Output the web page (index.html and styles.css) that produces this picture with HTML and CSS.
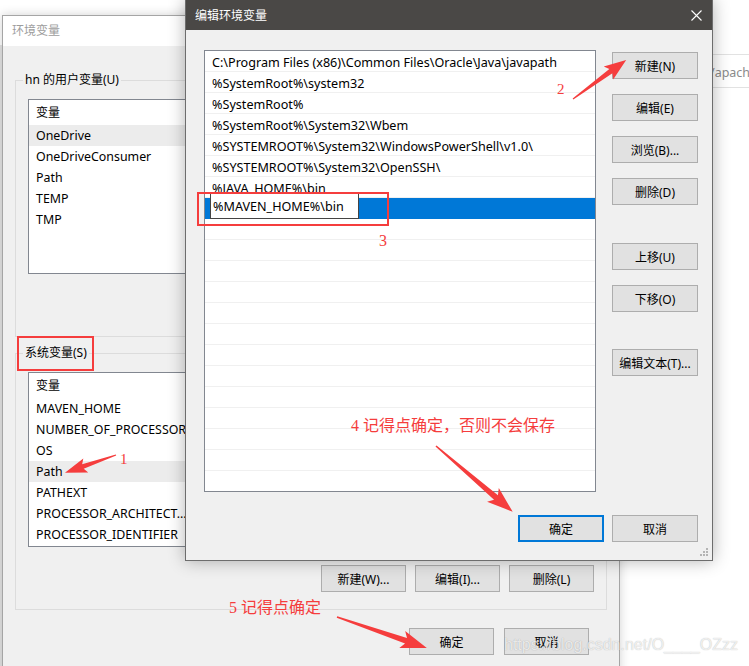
FILE: index.html
```html
<!DOCTYPE html>
<html lang="zh-CN">
<head>
    <meta charset="UTF-8">
    <title>编辑环境变量</title>
    <link rel="stylesheet" href="styles.css">
</head>
<body>
    <div class="desk">
        <div class="edge-strip"></div>
        <div class="bg-field">/apache</div>

        <!-- back window: 环境变量 -->
        <section class="win env">
            <div class="env-title">环境变量</div>
            <div class="env-body">
                <fieldset class="group">
                    <legend>hn 的用户变量(U)</legend>
                    <div class="listview">
                        <div class="lv-head">变量</div>
                        <div class="lv-row hot">OneDrive</div>
                        <div class="lv-row">OneDriveConsumer</div>
                        <div class="lv-row">Path</div>
                        <div class="lv-row">TEMP</div>
                        <div class="lv-row">TMP</div>
                    </div>
                    <div class="btn-row">
                        <button class="btn">新建(N)...</button>
                        <button class="btn">编辑(E)...</button>
                        <button class="btn">删除(D)</button>
                    </div>
                </fieldset>
                <fieldset class="group">
                    <legend>系统变量(S)</legend>
                    <div class="listview">
                        <div class="lv-head">变量</div>
                        <div class="lv-row">MAVEN_HOME</div>
                        <div class="lv-row">NUMBER_OF_PROCESSORS</div>
                        <div class="lv-row">OS</div>
                        <div class="lv-row hot">Path</div>
                        <div class="lv-row">PATHEXT</div>
                        <div class="lv-row">PROCESSOR_ARCHITECT...</div>
                        <div class="lv-row">PROCESSOR_IDENTIFIER</div>
                    </div>
                    <div class="btn-row">
                        <button class="btn">新建(W)...</button>
                        <button class="btn">编辑(I)...</button>
                        <button class="btn">删除(L)</button>
                    </div>
                </fieldset>
                <div class="env-foot">
                    <button class="btn">确定</button>
                    <button class="btn">取消</button>
                </div>
            </div>
        </section>

        <!-- front window: 编辑环境变量 -->
        <section class="win edit">
            <div class="edit-title">
                <span>编辑环境变量</span>
                <svg class="close" width="11" height="11" viewBox="0 0 11 11">
                    <path d="M0.5 0.5L10.5 10.5M10.5 0.5L0.5 10.5" stroke="#fff" stroke-width="1.1" fill="none"/>
                </svg>
            </div>
            <div class="edit-body">
                <div class="edit-main">
                    <div class="pathlist">
                        <div class="path-row">C:\Program Files (x86)\Common Files\Oracle\Java\javapath</div>
                        <div class="path-row">%SystemRoot%\system32</div>
                        <div class="path-row">%SystemRoot%</div>
                        <div class="path-row">%SystemRoot%\System32\Wbem</div>
                        <div class="path-row">%SYSTEMROOT%\System32\WindowsPowerShell\v1.0\</div>
                        <div class="path-row">%SYSTEMROOT%\System32\OpenSSH\</div>
                        <div class="path-row">%JAVA_HOME%\bin</div>
                        <div class="path-row sel"><div class="editor">%MAVEN_HOME%\bin</div></div>
                        <div class="path-row"></div>
                        <div class="path-row"></div>
                        <div class="path-row"></div>
                        <div class="path-row"></div>
                        <div class="path-row"></div>
                        <div class="path-row"></div>
                        <div class="path-row"></div>
                        <div class="path-row"></div>
                        <div class="path-row"></div>
                        <div class="path-row"></div>
                        <div class="path-row"></div>
                        <div class="path-row"></div>
                        <div class="path-row"></div>
                    </div>
                    <div class="side-btns">
                        <button class="btn">新建(N)</button>
                        <button class="btn">编辑(E)</button>
                        <button class="btn">浏览(B)...</button>
                        <button class="btn">删除(D)</button>
                        <button class="btn move-group">上移(U)</button>
                        <button class="btn">下移(O)</button>
                        <button class="btn text-group">编辑文本(T)...</button>
                    </div>
                </div>
                <div class="edit-foot">
                    <button class="btn default">确定</button>
                    <button class="btn">取消</button>
                </div>
            </div>
            <svg class="grip" width="9" height="9" viewBox="0 0 9 9">
                <rect x="6" y="0" width="2" height="2" fill="#b4b4b4"/>
                <rect x="3" y="3" width="2" height="2" fill="#b4b4b4"/>
                <rect x="6" y="3" width="2" height="2" fill="#b4b4b4"/>
                <rect x="0" y="6" width="2" height="2" fill="#b4b4b4"/>
                <rect x="3" y="6" width="2" height="2" fill="#b4b4b4"/>
                <rect x="6" y="6" width="2" height="2" fill="#b4b4b4"/>
            </svg>
        </section>

        <div class="watermark">https://blog.csdn.net/O____OZzz</div>

        <!-- red annotations -->
        <svg class="marks" width="749" height="666" viewBox="0 0 749 666">
            <rect x="18" y="337" width="75" height="33" fill="none" stroke="#f53d3d" stroke-width="2"/>
            <rect x="198" y="193" width="190" height="32" fill="none" stroke="#f53d3d" stroke-width="2"/>
            <g fill="#f53d3d">
                <polygon transform="translate(573 99) rotate(-36.3)" points="0,-0.6 47,-2.6 44,-8 66,0 44,8 47,2.6 0,0.6"/>
                <polygon transform="translate(116 455) rotate(160.9)" points="0,-0.6 35,-2.4 32,-7.5 54,0 32,7.5 35,2.4 0,0.6"/>
                <polygon transform="translate(436 446) rotate(40.6)" points="0,-0.8 79,-3 75,-9 101,0 75,9 79,3 0,0.8"/>
                <polygon transform="translate(337 617) rotate(19)" points="0,-0.8 73,-3 69,-9 95,0 69,9 73,3 0,0.8"/>
            </g>
        </svg>
        <span class="note n1">1</span>
        <span class="note n2">2</span>
        <span class="note n3">3</span>
        <span class="note n4">4 记得点确定，否则不会保存</span>
        <span class="note n5">5 记得点确定</span>
    </div>
</body>
</html>
```

FILE: styles.css
```css
* {
    box-sizing: border-box;
}
body {
    margin: 0;
    background: #ffffff;
    font-family: "Noto Sans", "Noto Sans CJK SC", sans-serif;
    font-size: 12px;
    color: #000;
}
.desk {
    position: relative;
    width: 749px;
    height: 666px;
    overflow: hidden;
}
.edge-strip {
    position: absolute;
    left: 0;
    top: 45px;
    width: 3px;
    height: 621px;
    background: #e4e4e4;
}
.bg-field {
    position: absolute;
    left: 710px;
    top: 54px;
    width: 60px;
    height: 34px;
    border-top: 1px solid #e2e2e2;
    border-bottom: 1px solid #e2e2e2;
    padding: 9px 0 0 0;
    color: #8a8a8a;
    font-size: 12.5px;
    white-space: nowrap;
}
.btn {
    width: 85px;
    height: 27px;
    padding: 0;
    border: 1px solid #adadad;
    background: #e1e1e1;
    font: inherit;
    color: #000;
}

/* back window */
.env {
    position: absolute;
    left: 2px;
    top: 15px;
    width: 618px;
    height: 700px;
    border: 1px solid #a5a5a5;
    background: #f0f0f0;
    box-shadow: 0 0 10px rgba(0, 0, 0, 0.18);
}
.env-title {
    height: 30px;
    line-height: 30px;
    padding-left: 9px;
    background: #ffffff;
    color: #9d9d9d;
}
.env-body {
    padding: 26px 12px 0;
}
.group {
    margin: 0;
    padding: 11px 12px 17px;
    border: 1px solid #dcdcdc;
    min-width: 0;
}
.group + .group {
    margin-top: 8px;
}
.group legend {
    margin-left: -5px;
    padding: 0 2px;
    line-height: 16px;
}
.listview {
    height: 175px;
    border: 1px solid #828790;
    background: #fff;
    overflow: hidden;
}
.lv-head {
    height: 25px;
    line-height: 25px;
    padding-left: 7px;
}
.lv-row {
    height: 21px;
    line-height: 21px;
    padding-left: 7px;
    font-size: 12.4px;
    white-space: nowrap;
}
.lv-row.hot {
    background: #ececec;
}
.btn-row {
    display: flex;
    justify-content: flex-end;
    gap: 9px;
    margin-top: 18px;
}
.env-foot {
    display: flex;
    justify-content: flex-end;
    gap: 10px;
    margin-top: 18px;
    padding-right: 18px;
}

/* front window */
.edit {
    position: absolute;
    left: 185px;
    top: -1px;
    width: 528px;
    height: 562px;
    border: 1px solid #6d6d6d;
    background: #f0f0f0;
    box-shadow: 0 0 16px rgba(0, 0, 0, 0.3);
}
.edit-title {
    height: 30px;
    display: flex;
    align-items: center;
    justify-content: space-between;
    padding: 0 10px 0 9px;
    background: #4a4846;
    color: #fff;
}
.edit-body {
    padding: 20px 14px 0 18px;
}
.edit-main {
    display: flex;
    gap: 16px;
}
.pathlist {
    width: 392px;
    height: 442px;
    border: 1px solid #828790;
    background: #fff;
    overflow: hidden;
}
.path-row {
    height: 21px;
    padding: 2px 0 0 7px;
    line-height: 20px;
    font-size: 12.6px;
    border-bottom: 1px solid #f0f0f0;
    white-space: nowrap;
}
.path-row.sel {
    position: relative;
    background: #0078d7;
    border-bottom-color: #0078d7;
}
.editor {
    position: absolute;
    left: 5px;
    top: -5px;
    width: 149px;
    height: 26px;
    padding: 2px 0 0 2px;
    line-height: 22px;
    border: 1px solid #444;
    background: #fff;
}
.side-btns {
    display: flex;
    flex-direction: column;
    gap: 15px;
    padding-top: 2px;
}
.side-btns .btn {
    width: 86px;
}
.side-btns .move-group {
    margin-top: 23px;
}
.side-btns .text-group {
    margin-top: 22px;
}
.edit-foot {
    display: flex;
    justify-content: flex-end;
    gap: 8px;
    margin-top: 23px;
}
.edit-foot .btn {
    width: 86px;
}
.btn.default {
    border: 2px solid #0078d7;
}
.grip {
    position: absolute;
    right: 3px;
    bottom: 3px;
}

.watermark {
    position: absolute;
    left: 504px;
    top: 636px;
    font-family: "Liberation Sans", sans-serif;
    font-size: 16px;
    color: rgba(255, 255, 255, 0.75);
    text-shadow: 0 0 1px rgba(0, 0, 0, 0.3);
    white-space: nowrap;
}

/* annotations */
.marks {
    position: absolute;
    left: 0;
    top: 0;
}
.note {
    position: absolute;
    font-family: "Liberation Serif", "Noto Sans CJK SC", serif;
    color: #f53d3d;
    line-height: 1;
    white-space: nowrap;
}
.n1 {
    left: 120px;
    top: 452px;
    font-size: 15px;
}
.n2 {
    left: 557px;
    top: 82px;
    font-size: 15px;
}
.n3 {
    left: 379px;
    top: 233px;
    font-size: 16px;
}
.n4 {
    left: 351px;
    top: 418px;
    font-size: 16px;
}
.n5 {
    left: 229px;
    top: 600px;
    font-size: 16px;
}
```
